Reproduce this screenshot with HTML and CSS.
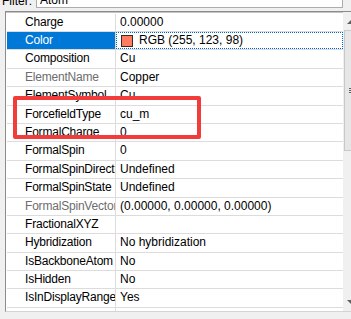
FILE: index.html
```html
<!DOCTYPE html>
<html>
<head>
<meta charset="utf-8">
<link rel="stylesheet" href="styles.css">
</head>
<body>
<div class="filter">
  <span class="flabel">Filter:</span>
  <div class="finput">Atom</div>
</div>
<div class="grid">
  <div class="rows">
    <div class="row"><div class="name">Charge</div><div class="val">0.00000</div></div>
    <div class="row sel"><div class="name">Color</div><div class="val"><span class="swatch"></span>RGB (255, 123, 98)</div></div>
    <div class="row"><div class="name">Composition</div><div class="val">Cu</div></div>
    <div class="row"><div class="name ro">ElementName</div><div class="val">Copper</div></div>
    <div class="row"><div class="name">ElementSymbol</div><div class="val">Cu</div></div>
    <div class="row"><div class="name">ForcefieldType</div><div class="val">cu_m</div></div>
    <div class="row"><div class="name">FormalCharge</div><div class="val">0</div></div>
    <div class="row"><div class="name">FormalSpin</div><div class="val">0</div></div>
    <div class="row"><div class="name">FormalSpinDirection</div><div class="val">Undefined</div></div>
    <div class="row"><div class="name">FormalSpinState</div><div class="val">Undefined</div></div>
    <div class="row"><div class="name ro">FormalSpinVector</div><div class="val">(0.00000, 0.00000, 0.00000)</div></div>
    <div class="row"><div class="name">FractionalXYZ</div><div class="val"></div></div>
    <div class="row"><div class="name">Hybridization</div><div class="val">No hybridization</div></div>
    <div class="row"><div class="name">IsBackboneAtom</div><div class="val">No</div></div>
    <div class="row"><div class="name">IsHidden</div><div class="val">No</div></div>
    <div class="row"><div class="name">IsInDisplayRange</div><div class="val">Yes</div></div>
    <div class="row"><div class="name">IsInRing</div><div class="val">No</div></div>
  </div>
  <div class="scroll">
    <div class="sb-btn"><svg width="17" height="17" viewBox="0 0 17 17"><path d="M4 12 L8.5 7.5 L13 12 Z" fill="#606060"/></svg></div>
    <div class="sb-track">
      <div class="thumb"><div class="grip"></div><div class="grip"></div><div class="grip"></div></div>
    </div>
    <div class="sb-btn"><svg width="17" height="17" viewBox="0 0 17 17"><path d="M4 6 L8.5 10.5 L13 6 Z" fill="#606060"/></svg></div>
  </div>
</div>
<div class="annot"></div>
</body>
</html>
```
FILE: styles.css
```css
html, body {
  margin: 0;
  padding: 0;
}
body {
  width: 351px;
  height: 319px;
  overflow: hidden;
  background: #f0f0f0;
  font-family: "Liberation Sans", Arial, sans-serif;
  font-size: 12px;
  color: #000;
  position: relative;
}
.filter {
  height: 8px;
  display: flex;
  align-items: flex-end;
}
.flabel {
  width: 36px;
  line-height: 14px;
  padding-left: 2px;
  box-sizing: border-box;
}
.finput {
  width: 307px;
  height: 20px;
  box-sizing: border-box;
  border: 1px solid #acacac;
  background: #fff;
  padding: 0 3px;
  line-height: 12px;
  display: flex;
  align-items: flex-end;
  padding-bottom: 1px;
}
.grid {
  margin-top: 3px;
  margin-left: 5px;
  height: 301px;
  box-sizing: border-box;
  border-top: 1px solid #8c8c8c;
  border-left: 1px solid #8c8c8c;
  border-bottom: 1px solid #d4d4d4;
  display: flex;
  width: 360px;
}
.rows {
  width: 337px;
  background: #fff;
  overflow: hidden;
  padding-top: 1.6px;
  padding-left: 1px;
  box-sizing: border-box;
  box-shadow: inset 0 1px 0 #c4c4c4;
}
.row {
  display: grid;
  grid-template-columns: 109px 1fr;
  height: 18.4px;
  box-sizing: border-box;
  border-bottom: 1px solid #dcdcdc;
}
.name {
  padding-left: 18px;
  border-right: 1px solid #dcdcdc;
  white-space: nowrap;
  overflow: hidden;
  line-height: 17.4px;
  letter-spacing: -0.2px;
}
.name.ro {
  color: #6d6d6d;
}
.val {
  padding-left: 4px;
  white-space: nowrap;
  overflow: hidden;
  line-height: 17.4px;
  display: flex;
  align-items: center;
}
.sel .name {
  background: #0078d7;
  color: #fff;
}
.sel .val {
  outline: 1px dotted #0066cc;
  outline-offset: -1px;
  padding-left: 5px;
}
.swatch {
  width: 12px;
  height: 12px;
  box-sizing: border-box;
  border: 1px solid #3a2a26;
  background: #ff7b62;
  margin-right: 6px;
  flex: none;
}
.scroll {
  width: 17px;
  flex: none;
  background: #f0f0f0;
  display: flex;
  flex-direction: column;
}
.sb-btn {
  height: 17px;
  flex: none;
}
.sb-btn svg {
  display: block;
}
.sb-track {
  flex: 1;
  padding-top: 1px;
}
.thumb {
  height: 121px;
  margin-left: 1px;
  box-sizing: border-box;
  border: 1px solid #c8c8c8;
  background: #e6e6e6;
  display: flex;
  flex-direction: column;
  justify-content: center;
  align-items: center;
  gap: 1px;
}
.grip {
  width: 7px;
  height: 1px;
  background: #606060;
}
.annot {
  position: absolute;
  left: 13px;
  top: 96px;
  width: 188px;
  height: 43px;
  box-sizing: border-box;
  border: 4px solid #f23c3c;
  border-radius: 2px;
}
```
